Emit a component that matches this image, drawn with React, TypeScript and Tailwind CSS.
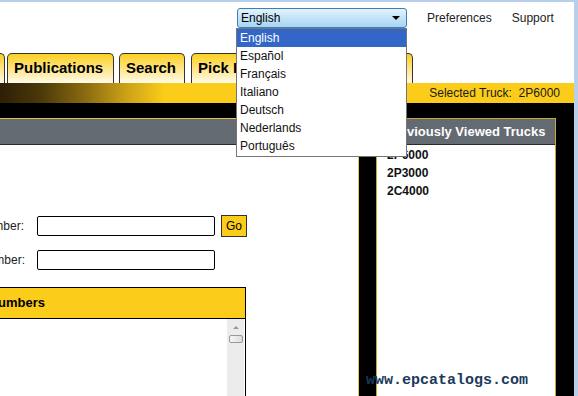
import React from "react";

const tabCls =
  "h-[30px] border border-[#333] border-b-0 rounded-t-[5px] bg-[linear-gradient(to_bottom,#fcd020_0%,#fde27a_45%,#fffbea_100%)] flex items-center text-[15px] font-bold text-black whitespace-nowrap overflow-hidden";

export default function App() {
  const langs = ["English", "Español", "Français", "Italiano", "Deutsch", "Nederlands", "Português"];
  return (
    <div
      className="relative w-[578px] h-[396px] overflow-hidden bg-white flex flex-col text-[12px] text-[#1a1a1a]"
      style={{ fontFamily: '"Liberation Sans", Arial, sans-serif' }}
    >
      <div className="h-[2px] bg-[#b7cfe8] shrink-0" />
      <div className="flex flex-1 min-h-0">
        <div className="w-[574px] flex flex-col">
          {/* header */}
          <div className="h-[51px] shrink-0 flex items-start pt-[6px] pl-[237px]">
            <div className="w-[170px] h-[20px] rounded-[3px] border border-[#3c7fb1] bg-[linear-gradient(to_bottom,#e3f2fc_0%,#c4e3f8_50%,#a9d5f4_100%)] flex items-center justify-between pl-[3px] pr-[6px]">
              <span className="text-[12px] text-black">English</span>
              <span className="w-0 h-0 border-l-[4px] border-r-[4px] border-t-[4px] border-l-transparent border-r-transparent border-t-black" />
            </div>
            <span className="ml-[20px] mt-[1px] text-[12px] text-[#222]">Preferences</span>
            <span className="ml-[20px] mt-[1px] text-[12px] text-[#222]">Support</span>
          </div>
          {/* tabs */}
          <div className="h-[30px] shrink-0 flex items-end">
            <div className={`${tabCls} ml-[-60px] w-[65px]`} />
            <div className={`${tabCls} ml-[2px] w-[107px] pl-[6px]`}>Publications</div>
            <div className={`${tabCls} ml-[5px] w-[66px] pl-[6px]`}>Search</div>
            <div className={`${tabCls} ml-[6px] w-[222px] pl-[6px]`}>Pick Lists</div>
          </div>
          {/* gradient band */}
          <div className="h-[20px] shrink-0 bg-[linear-gradient(to_right,#2e1f06_0px,#4a3809_40px,#8a6a10_85px,#c9a016_125px,#fccc1a_165px)] flex items-center justify-end pr-[14px] text-[12px] text-[#1a1a1a] whitespace-pre">
            Selected Truck:  2P6000
          </div>
          <div className="h-[15px] shrink-0 bg-black" />
          {/* content */}
          <div className="flex-1 flex bg-black min-h-0 overflow-hidden">
            <div className="w-[359px] shrink-0 border-t border-r border-[#e6c44a] bg-white flex flex-col overflow-hidden">
              <div className="h-[26px] shrink-0 bg-[#646a72] border-b border-[#2a2a2a]" />
              <div className="flex flex-col pt-[70px] shrink-0">
                <div className="flex items-center h-[22px] shrink-0">
                  <div className="w-[24px] shrink-0 flex justify-end whitespace-nowrap text-[12px] text-[#222]">Serial Number:</div>
                  <div className="ml-[13px] w-[178px] h-[20px] border border-black rounded-[2px] bg-white" />
                  <div className="ml-[6px] w-[26px] h-[22px] border border-[#333] bg-[#fccc1a] flex items-center justify-center text-[12px] text-black">Go</div>
                </div>
                <div className="flex items-center h-[20px] mt-[13px] shrink-0">
                  <div className="w-[25px] shrink-0 flex justify-end whitespace-nowrap text-[12px] text-[#222]">Part Number:</div>
                  <div className="ml-[12px] w-[178px] h-[20px] border border-black rounded-[2px] bg-white" />
                </div>
                <div className="mt-[17px] ml-[-60px] w-[306px] border-t border-r border-black flex flex-col h-[120px] shrink-0">
                  <div className="h-[31px] shrink-0 bg-[#fccc1a] border-b border-black flex items-center justify-end pr-[200px] text-[13px] font-bold text-black whitespace-nowrap">
                    Serial Numbers
                  </div>
                  <div className="flex-1 flex justify-end pr-[1px]">
                    <div className="w-[17px] bg-[#ececec] flex flex-col items-center pt-[7px]">
                      <span className="w-0 h-0 border-l-[3px] border-r-[3px] border-b-[3px] border-l-transparent border-r-transparent border-b-[#999]" />
                      <div className="mt-[6px] w-[14px] h-[8px] rounded-[2px] border border-[#999] bg-[linear-gradient(to_right,#f6f6f6,#dcdcdc)]" />
                    </div>
                  </div>
                </div>
              </div>
            </div>
            <div className="w-[17px] shrink-0" />
            <div className="w-[180px] shrink-0 border-t border-l border-r border-[#c9a83a] bg-white flex flex-col">
              <div className="h-[26px] shrink-0 bg-[#646a72] border-b border-[#2a2a2a] flex items-center pl-[9px] text-[13px] font-bold text-white whitespace-nowrap">
                Previously Viewed Trucks
              </div>
              <div className="flex flex-col pl-[10px] pt-[1px] text-[12px] font-bold text-[#111] leading-[18px]">
                <span>2P6000</span>
                <span>2P3000</span>
                <span>2C4000</span>
              </div>
            </div>
          </div>
        </div>
        <div className="w-[4px] bg-[#b7cfe8]" />
      </div>

      {/* dropdown list */}
      <div className="absolute left-[236px] top-[28px] w-[171px] h-[129px] bg-white border border-[#767676] flex flex-col">
        {langs.map((l, i) => (
          <div
            key={l}
            className={
              i === 0
                ? "h-[18px] flex items-center pl-[3px] bg-[#3266c8] text-white text-[12px]"
                : "h-[18px] flex items-center pl-[3px] text-[#111] text-[12px]"
            }
          >
            {l}
          </div>
        ))}
      </div>

      {/* watermark */}
      <div
        className="absolute left-[366px] top-[370px] text-[15px] font-bold text-[#1b3a5c] whitespace-nowrap"
        style={{ fontFamily: '"Liberation Mono", "Courier New", monospace' }}
      >
        www.epcatalogs.com
      </div>
    </div>
  );
}
